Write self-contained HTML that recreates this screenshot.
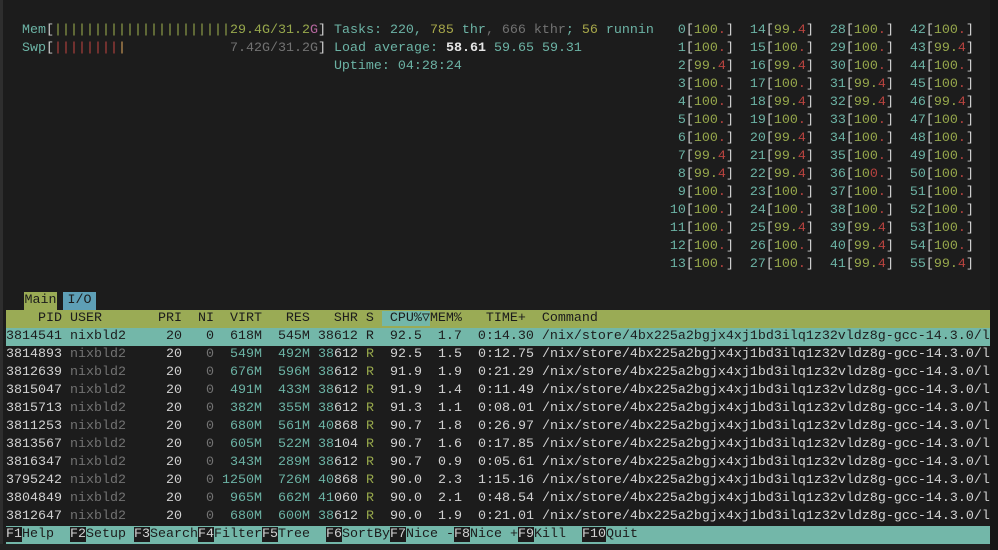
<!DOCTYPE html>
<html><head><meta charset="utf-8"><style>
html,body{margin:0;padding:0;background:#1c1c1c;width:998px;height:550px;overflow:hidden}
#scr{position:absolute;left:0;top:0;width:998px;height:550px;background:#1c1c1c}
#lb{position:absolute;left:0;top:0;width:3px;height:550px;background:#2e2e2e}
#rb{position:absolute;left:990px;top:0;width:8px;height:550px;background:#161616}
#bb{position:absolute;left:0;top:544px;width:990px;height:6px;background:#222}
.l{position:absolute;left:6px;height:18px;line-height:18px;white-space:pre;font-family:"Liberation Mono","DejaVu Sans Mono",monospace;font-size:13.333px;color:#d2d2d2}
.t{color:#6cb3a5}.g{color:#97a84c}.r{color:#b8433f}.o{color:#d6a15a}.d{color:#727272}.w{color:#d2d2d2}.m{color:#b767a0}.y{color:#a8a84a}.wb{color:#e6e6e6;font-weight:bold}
.hdr{background:#9aab55;color:#1c1c1c;width:984px}
.hc{background:#73b7a9}
.sel{background:#73b7a9;color:#1c1c1c;width:984px}
.tab{position:absolute;top:292px;height:18px;line-height:18px;font-family:"Liberation Mono",monospace;font-size:13.333px;color:#1c1c1c;text-align:center}
</style></head><body><div id="scr">
<div id="lb"></div><div id="rb"></div><div id="bb"></div>
<div class="l" style="top:22px">  <span class="t">Mem</span>[<span class="g">||||||||||||||||||||||29.4G/31.2</span><span class="m">G</span>] <span class="t">Tasks: 220, </span><span class="y">785</span><span class="t"> thr</span><span class="d">, 666 kthr</span><span class="t">; </span><span class="y">56</span><span class="t"> runnin</span>  <span class="t"> 0</span>[<span class="g">100</span><span class="r">.</span>]  <span class="t">14</span>[<span class="g">99.</span><span class="r">4</span>]  <span class="t">28</span>[<span class="g">100</span><span class="r">.</span>]  <span class="t">42</span>[<span class="g">100</span><span class="r">.</span>]</div>
<div class="l" style="top:40px">  <span class="t">Swp</span>[<span class="r">||||||||</span><span class="o">|</span>             <span class="d">7.42G/31.2G</span>] <span class="t">Load average: </span><span class="wb">58.61 </span><span class="t">59.65 59.31</span>           <span class="t"> 1</span>[<span class="g">100</span><span class="r">.</span>]  <span class="t">15</span>[<span class="g">100</span><span class="r">.</span>]  <span class="t">29</span>[<span class="g">100</span><span class="r">.</span>]  <span class="t">43</span>[<span class="g">99.</span><span class="r">4</span>]</div>
<div class="l" style="top:58px">                                         <span class="t">Uptime: 04:28:24</span>                          <span class="t"> 2</span>[<span class="g">99.</span><span class="r">4</span>]  <span class="t">16</span>[<span class="g">99.</span><span class="r">4</span>]  <span class="t">30</span>[<span class="g">100</span><span class="r">.</span>]  <span class="t">44</span>[<span class="g">100</span><span class="r">.</span>]</div>
<div class="l" style="top:76px">                                                                                   <span class="t"> 3</span>[<span class="g">100</span><span class="r">.</span>]  <span class="t">17</span>[<span class="g">100</span><span class="r">.</span>]  <span class="t">31</span>[<span class="g">99.</span><span class="r">4</span>]  <span class="t">45</span>[<span class="g">100</span><span class="r">.</span>]</div>
<div class="l" style="top:94px">                                                                                   <span class="t"> 4</span>[<span class="g">100</span><span class="r">.</span>]  <span class="t">18</span>[<span class="g">99.</span><span class="r">4</span>]  <span class="t">32</span>[<span class="g">99.</span><span class="r">4</span>]  <span class="t">46</span>[<span class="g">99.</span><span class="r">4</span>]</div>
<div class="l" style="top:112px">                                                                                   <span class="t"> 5</span>[<span class="g">100</span><span class="r">.</span>]  <span class="t">19</span>[<span class="g">100</span><span class="r">.</span>]  <span class="t">33</span>[<span class="g">100</span><span class="r">.</span>]  <span class="t">47</span>[<span class="g">100</span><span class="r">.</span>]</div>
<div class="l" style="top:130px">                                                                                   <span class="t"> 6</span>[<span class="g">100</span><span class="r">.</span>]  <span class="t">20</span>[<span class="g">99.</span><span class="r">4</span>]  <span class="t">34</span>[<span class="g">100</span><span class="r">.</span>]  <span class="t">48</span>[<span class="g">100</span><span class="r">.</span>]</div>
<div class="l" style="top:148px">                                                                                   <span class="t"> 7</span>[<span class="g">99.</span><span class="r">4</span>]  <span class="t">21</span>[<span class="g">99.</span><span class="r">4</span>]  <span class="t">35</span>[<span class="g">100</span><span class="r">.</span>]  <span class="t">49</span>[<span class="g">100</span><span class="r">.</span>]</div>
<div class="l" style="top:166px">                                                                                   <span class="t"> 8</span>[<span class="g">99.</span><span class="r">4</span>]  <span class="t">22</span>[<span class="g">99.</span><span class="r">4</span>]  <span class="t">36</span>[<span class="g">10</span><span class="r">0.</span>]  <span class="t">50</span>[<span class="g">100</span><span class="r">.</span>]</div>
<div class="l" style="top:184px">                                                                                   <span class="t"> 9</span>[<span class="g">100</span><span class="r">.</span>]  <span class="t">23</span>[<span class="g">100</span><span class="r">.</span>]  <span class="t">37</span>[<span class="g">100</span><span class="r">.</span>]  <span class="t">51</span>[<span class="g">100</span><span class="r">.</span>]</div>
<div class="l" style="top:202px">                                                                                   <span class="t">10</span>[<span class="g">100</span><span class="r">.</span>]  <span class="t">24</span>[<span class="g">100</span><span class="r">.</span>]  <span class="t">38</span>[<span class="g">100</span><span class="r">.</span>]  <span class="t">52</span>[<span class="g">100</span><span class="r">.</span>]</div>
<div class="l" style="top:220px">                                                                                   <span class="t">11</span>[<span class="g">100</span><span class="r">.</span>]  <span class="t">25</span>[<span class="g">99.</span><span class="r">4</span>]  <span class="t">39</span>[<span class="g">99.</span><span class="r">4</span>]  <span class="t">53</span>[<span class="g">100</span><span class="r">.</span>]</div>
<div class="l" style="top:238px">                                                                                   <span class="t">12</span>[<span class="g">100</span><span class="r">.</span>]  <span class="t">26</span>[<span class="g">100</span><span class="r">.</span>]  <span class="t">40</span>[<span class="g">99.</span><span class="r">4</span>]  <span class="t">54</span>[<span class="g">100</span><span class="r">.</span>]</div>
<div class="l" style="top:256px">                                                                                   <span class="t">13</span>[<span class="g">100</span><span class="r">.</span>]  <span class="t">27</span>[<span class="g">100</span><span class="r">.</span>]  <span class="t">41</span>[<span class="g">99.</span><span class="r">4</span>]  <span class="t">55</span>[<span class="g">99.</span><span class="r">4</span>]</div>
<div class="tab" style="left:24px;width:33px;background:#9aab55">Main</div>
<div class="tab" style="left:63px;width:33px;background:#5e9fb6">I/O</div>
<div class="l hdr" style="top:310px">    PID USER       PRI  NI  VIRT   RES   SHR S <span class="hc"> CPU%▽</span>MEM%   TIME+  Command</div>
<div class="l sel" style="top:328px">3814541 nixbld2     20   0  618M  545M 38612 R  92.5  1.7  0:14.30 /nix/store/4bx225a2bgjx4xj1bd3ilq1z32vldz8g-gcc-14.3.0/l</div>
<div class="l" style="top:346px">3814893 <span class="d">nixbld2</span>     20   <span class="d">0</span>  <span class="t">549M</span>  <span class="t">492M</span> <span class="t">38</span>612 <span class="g">R</span>  92.5  1.5  0:12.75 /nix/store/4bx225a2bgjx4xj1bd3ilq1z32vldz8g-gcc-14.3.0/l</div>
<div class="l" style="top:364px">3812639 <span class="d">nixbld2</span>     20   <span class="d">0</span>  <span class="t">676M</span>  <span class="t">596M</span> <span class="t">38</span>612 <span class="g">R</span>  91.9  1.9  0:21.29 /nix/store/4bx225a2bgjx4xj1bd3ilq1z32vldz8g-gcc-14.3.0/l</div>
<div class="l" style="top:382px">3815047 <span class="d">nixbld2</span>     20   <span class="d">0</span>  <span class="t">491M</span>  <span class="t">433M</span> <span class="t">38</span>612 <span class="g">R</span>  91.9  1.4  0:11.49 /nix/store/4bx225a2bgjx4xj1bd3ilq1z32vldz8g-gcc-14.3.0/l</div>
<div class="l" style="top:400px">3815713 <span class="d">nixbld2</span>     20   <span class="d">0</span>  <span class="t">382M</span>  <span class="t">355M</span> <span class="t">38</span>612 <span class="g">R</span>  91.3  1.1  0:08.01 /nix/store/4bx225a2bgjx4xj1bd3ilq1z32vldz8g-gcc-14.3.0/l</div>
<div class="l" style="top:418px">3811253 <span class="d">nixbld2</span>     20   <span class="d">0</span>  <span class="t">680M</span>  <span class="t">561M</span> <span class="t">40</span>868 <span class="g">R</span>  90.7  1.8  0:26.97 /nix/store/4bx225a2bgjx4xj1bd3ilq1z32vldz8g-gcc-14.3.0/l</div>
<div class="l" style="top:436px">3813567 <span class="d">nixbld2</span>     20   <span class="d">0</span>  <span class="t">605M</span>  <span class="t">522M</span> <span class="t">38</span>104 <span class="g">R</span>  90.7  1.6  0:17.85 /nix/store/4bx225a2bgjx4xj1bd3ilq1z32vldz8g-gcc-14.3.0/l</div>
<div class="l" style="top:454px">3816347 <span class="d">nixbld2</span>     20   <span class="d">0</span>  <span class="t">343M</span>  <span class="t">289M</span> <span class="t">38</span>612 <span class="g">R</span>  90.7  0.9  0:05.61 /nix/store/4bx225a2bgjx4xj1bd3ilq1z32vldz8g-gcc-14.3.0/l</div>
<div class="l" style="top:472px">3795242 <span class="d">nixbld2</span>     20   <span class="d">0</span> <span class="t">1250M</span>  <span class="t">726M</span> <span class="t">40</span>868 <span class="g">R</span>  90.0  2.3  1:15.16 /nix/store/4bx225a2bgjx4xj1bd3ilq1z32vldz8g-gcc-14.3.0/l</div>
<div class="l" style="top:490px">3804849 <span class="d">nixbld2</span>     20   <span class="d">0</span>  <span class="t">965M</span>  <span class="t">662M</span> <span class="t">41</span>060 <span class="g">R</span>  90.0  2.1  0:48.54 /nix/store/4bx225a2bgjx4xj1bd3ilq1z32vldz8g-gcc-14.3.0/l</div>
<div class="l" style="top:508px">3812647 <span class="d">nixbld2</span>     20   <span class="d">0</span>  <span class="t">680M</span>  <span class="t">600M</span> <span class="t">38</span>612 <span class="g">R</span>  90.0  1.9  0:21.01 /nix/store/4bx225a2bgjx4xj1bd3ilq1z32vldz8g-gcc-14.3.0/l</div>
<div class="l" style="top:526px;width:984px;background:#73b7a9;color:#1c1c1c"><span style="background:#1c1c1c;color:#d2d2d2">F1</span>Help  <span style="background:#1c1c1c;color:#d2d2d2">F2</span>Setup <span style="background:#1c1c1c;color:#d2d2d2">F3</span>Search<span style="background:#1c1c1c;color:#d2d2d2">F4</span>Filter<span style="background:#1c1c1c;color:#d2d2d2">F5</span>Tree  <span style="background:#1c1c1c;color:#d2d2d2">F6</span>SortBy<span style="background:#1c1c1c;color:#d2d2d2">F7</span>Nice -<span style="background:#1c1c1c;color:#d2d2d2">F8</span>Nice +<span style="background:#1c1c1c;color:#d2d2d2">F9</span>Kill  <span style="background:#1c1c1c;color:#d2d2d2">F10</span>Quit  </div>
</div></body></html>
